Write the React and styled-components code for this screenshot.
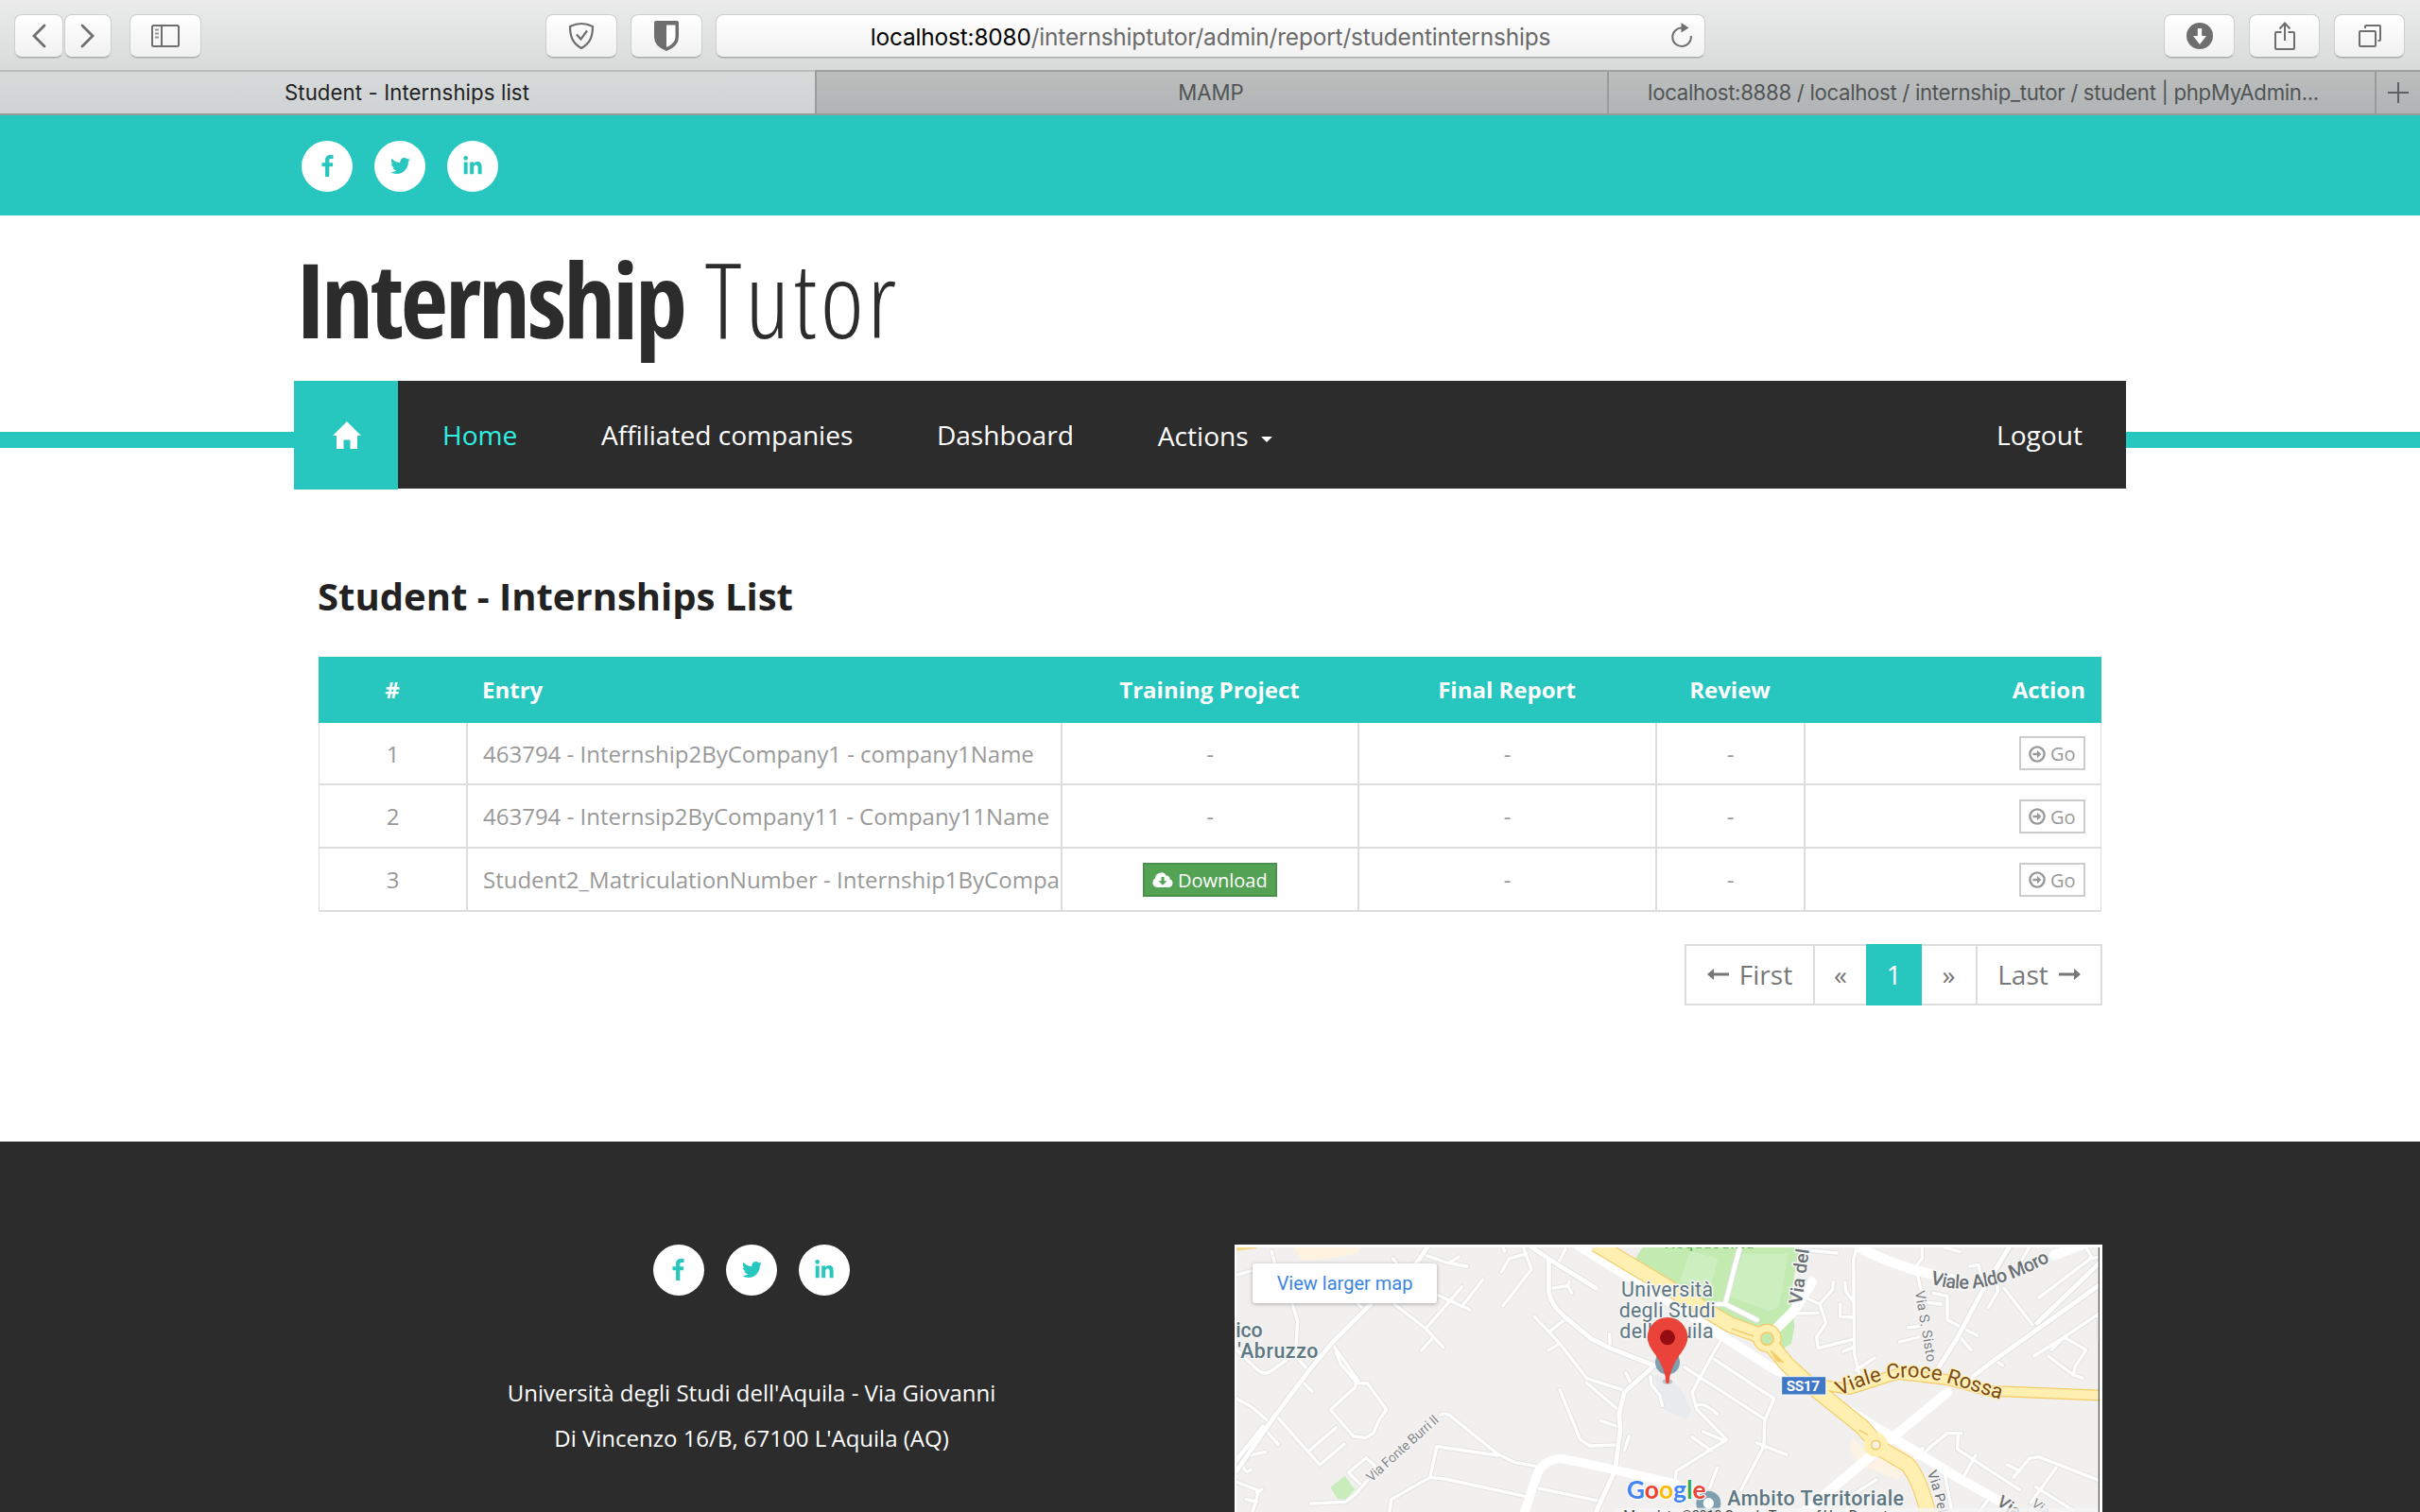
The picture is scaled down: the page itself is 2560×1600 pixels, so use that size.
import React from "react";
import styled, { createGlobalStyle } from "styled-components";
import { FaTwitter, FaLinkedinIn } from "react-icons/fa";

const TEAL = "#27c6bf";
const DARK = "#2c2c2c";
const LINE = "#dddddd";

const Global = createGlobalStyle`
  * { box-sizing: border-box; }
  body { margin: 0; background: #fff; font-family: "Open Sans", sans-serif; overflow: hidden; }
`;

const Page = styled.div`
  width: 2560px;
  height: 1600px;
  display: flex;
  flex-direction: column;
  overflow: hidden;
  background: #fff;
`;

/* ---------- browser chrome ---------- */
const Toolbar = styled.div`
  height: 76px;
  flex: none;
  display: flex;
  align-items: flex-start;
  padding: 15px 16px 0 15px;
  background: linear-gradient(#ebebeb, #e5e7e6 30%, #d9dbda);
  border-bottom: 2px solid #bbbdbc;
`;
const ToolButton = styled.div`
  width: ${(p) => p.$w || 75}px;
  height: 46px;
  margin-right: ${(p) => p.$gap || 0}px;
  display: flex;
  align-items: center;
  justify-content: center;
  border: 1px solid #cdcfce;
  border-bottom-color: #a9abaa;
  border-radius: 8px;
  background: linear-gradient(#fff, #f1f1f1);
  box-shadow: 0 1px 0 rgba(0, 0, 0, 0.12);
`;
const Address = styled.div`
  width: 1047px;
  height: 46px;
  display: flex;
  align-items: center;
  justify-content: center;
  position: relative;
  border: 1px solid #cdcfce;
  border-bottom-color: #a9abaa;
  border-radius: 8px;
  background: linear-gradient(#fff, #f1f1f1);
  box-shadow: 0 1px 0 rgba(0, 0, 0, 0.12);
  font: 24.4px/44px Inter, sans-serif;
  letter-spacing: -0.16px;
  color: #6a6a6a;
  padding-top: 2px;
  white-space: nowrap;
`;
const Host = styled.span`
  color: #000;
`;
const Reload = styled.svg`
  position: absolute;
  right: 11px;
  top: 7px;
`;
const Grow = styled.div`
  flex: 1;
`;
const Tabs = styled.div`
  height: 46px;
  flex: none;
  display: flex;
  border-bottom: 2px solid #979a99;
`;
const Tab = styled.div`
  width: ${(p) => p.$w}px;
  display: flex;
  align-items: center;
  justify-content: center;
  padding-right: ${(p) => p.$pr || 0}px;
  font: 22.2px/44px Inter, sans-serif;
  letter-spacing: ${(p) => p.$ls || 0}px;
  white-space: nowrap;
  color: ${(p) => (p.$active ? "#1f2222" : "#515454")};
  background: ${(p) => (p.$active ? "linear-gradient(#d8dada, #cfd3d4)" : "linear-gradient(#bcbebd, #b0b4b5)")};
  border-left: ${(p) => (p.$active ? "0" : "2px solid #999c9b")};
  box-shadow: ${(p) => (p.$active ? "none" : "0 -2px 0 #a0a2a1")};
`;

/* ---------- site header ---------- */
const TopBar = styled.div`
  height: 106px;
  flex: none;
  display: flex;
  align-items: center;
  padding: 2px 0 0 319px;
  background: ${TEAL};
`;
const Socials = styled.div`
  display: flex;
  gap: 23.2px;
`;
const Circle = styled.a`
  width: 54px;
  height: 54px;
  display: flex;
  align-items: center;
  justify-content: center;
  border-radius: 50%;
  background: #fff;
  color: ${TEAL};
  padding-bottom: 1px;
`;
const Brand = styled.div`
  height: 175px;
  flex: none;
  display: flex;
  padding-left: 314px;
  font-size: 110px;
  line-height: 150px;
  padding-top: 12px;
  color: ${DARK};
  font-stretch: 75%;
  white-space: nowrap;
`;
const BrandBold = styled.span`
  font-weight: 700;
  letter-spacing: -3.1px;
`;
const BrandLight = styled.span`
  font-weight: 300;
  letter-spacing: 3.7px;
  margin-left: 22px;
`;
const NavStrip = styled.div`
  height: 115px;
  flex: none;
  padding: 0 311px;
  background: linear-gradient(${TEAL}, ${TEAL}) 0 54px / 100% 17px no-repeat;
`;
const Nav = styled.nav`
  width: 1938px;
  height: 114px;
  display: flex;
  background: ${DARK};
`;
const HomeTile = styled.div`
  width: 110px;
  height: 115px;
  display: flex;
  align-items: center;
  justify-content: center;
  padding: 0 0 0 2px;
  background: ${TEAL};
`;
const NavLink = styled.a`
  margin-left: ${(p) => p.$ml || 0}px;
  margin-right: ${(p) => p.$mr || 0}px;
  padding-top: ${(p) => p.$pt || 0}px;
  font-size: 28.1px;
  line-height: 115px;
  white-space: nowrap;
  color: ${(p) => (p.$active ? "#2ef0e4" : "#fff")};
`;
const Caret = styled.i`
  display: inline-block;
  margin-left: 13px;
  vertical-align: 4px;
  border: 6px solid transparent;
  border-top-color: #fff;
  border-bottom: 0;
`;

/* ---------- content ---------- */
const Content = styled.main`
  height: 690px;
  flex: none;
  padding: 85px 336px 0 336px;
  display: flex;
  flex-direction: column;
`;
const Title = styled.h1`
  margin: 0 0 37px;
  font-size: 40px;
  line-height: 55px;
  font-weight: 700;
  color: #222;
`;
const Table = styled.div`
  width: 1886px;
  margin-left: 1px;
  border: 1px solid ${LINE};
  border-top: 0;
  border-bottom-width: 2px;
`;
const GRID = "157px 629px 314px 315px 157px 1fr";
const HeadRow = styled.div`
  height: 70px;
  margin: 0 -1px;
  display: grid;
  grid-template-columns: ${GRID};
  background: ${TEAL};
  color: #fff;
  font-weight: 700;
  font-size: 24px;
  line-height: 70px;
`;
const Row = styled.div`
  height: ${(p) => p.$h}px;
  display: grid;
  grid-template-columns: ${GRID};
  border-top: ${(p) => (p.$first ? 0 : 2)}px solid ${LINE};
  color: #999;
  font-size: 24px;
`;
const Cell = styled.div`
  display: flex;
  align-items: center;
  justify-content: ${(p) => p.$align || "center"};
  padding: 0 ${(p) => (p.$head ? 17 : 16)}px 0 16px;
  overflow: hidden;
  white-space: nowrap;
  border-right: ${(p) => (p.$line ? 2 : 0)}px solid ${LINE};
`;
const Entry = styled.span`
  width: 612px;
  flex: none;
  overflow: hidden;
`;
const Button = styled.button`
  height: 36px;
  flex: none;
  display: flex;
  align-items: center;
  gap: 4.5px;
  padding: 1px 8.5px 0;
  font: 20px/31px "Open Sans", sans-serif;
  color: ${(p) => (p.$green ? "#fff" : "#999")};
  background: ${(p) => (p.$green ? "#54a355" : "#fff")};
  border: 2px solid ${(p) => (p.$green ? "#4a914b" : "#ccc")};
`;
const Pager = styled.div`
  align-self: flex-end;
  height: 65px;
  margin-top: 34px;
  display: flex;
  border: 2px solid ${LINE};
  font-size: 28px;
  line-height: 60px;
  color: #777;
`;
const PageLink = styled.a`
  width: ${(p) => p.$w}px;
  display: flex;
  align-items: center;
  justify-content: center;
  gap: 10px;
  padding-bottom: 2px;
  border-left: ${(p) => (p.$line ? 2 : 0)}px solid ${LINE};
  ${(p) => p.$active && `background: ${TEAL}; color: #fff; margin: -2px 0;`}
`;

/* ---------- footer ---------- */
const Footer = styled.footer`
  flex: 1;
  display: flex;
  justify-content: space-between;
  align-items: flex-start;
  padding: 109px 336px 0 337px;
  background: ${DARK};
`;
const Contact = styled.div`
  width: 916px;
  display: flex;
  flex-direction: column;
  align-items: center;
`;
const Addr = styled.p`
  margin: 79px 0 0;
  text-align: center;
  font-size: 24px;
  line-height: 48px;
  color: #fff;
`;
const MapFrame = styled.div`
  width: 918px;
  height: 283px;
  overflow: hidden;
  position: relative;
  background: #fff;
`;
const MapSvg = styled.svg`
  display: block;
`;
const MapButton = styled.a`
  position: absolute;
  left: 19px;
  top: 20px;
  width: 195px;
  height: 42px;
  border-radius: 3px;
  background: #fff;
  box-shadow: 0 1px 4px rgba(0, 0, 0, 0.3);
  text-align: center;
  font: 20px/42px Roboto, sans-serif;
  color: #3a84df;
`;

const G = "#6e6e6e";

const FacebookIcon = () => (
  <svg width="13" height="23" viewBox="0 0 13 23">
    <path d="M12.500 0.200V3.900H10.300C8.600 3.900 8.300 4.700 8.300 5.800V8.300H12.300L11.800 12.300H8.300V23H4.100V12.300H0.500V8.300H4.100V5.300C4.100 1.900 6.200 0 9.400 0 10.900 0 12.100 0.100 12.500 0.200Z" fill={TEAL} />
  </svg>
);

const SocialLinks = () => (
  <Socials>
    <Circle><FacebookIcon /></Circle>
    <Circle><FaTwitter size={21} /></Circle>
    <Circle><FaLinkedinIn size={22} /></Circle>
  </Socials>
);

const GoIcon = () => (
  <svg width="18" height="18" viewBox="0 0 18 18">
    <circle cx="9" cy="9" r="7.6" fill="none" stroke="#999" strokeWidth="2.4" />
    <path d="M4.5 7.7H9V4.8L13.4 9 9 13.2V10.3H4.5Z" fill="#999" />
  </svg>
);
const CloudIcon = () => (
  <svg width="22" height="16" viewBox="0 0 22 16">
    <path d="M5 16A5 5 0 0 1 3 6.6 6.3 6.3 0 0 1 14.7 3.500 3.500 3.500 0 0 1 18.500 7.300 4.500 4.500 0 0 1 17.500 16Z" fill="#fff" />
    <path d="M9.500 5h3v4.200h3L11 13.800 6.500 9.200h3Z" fill="#54a355" />
  </svg>
);
const Arrow = ({ flip }) => (
  <svg width="24" height="14" viewBox="0 0 24 14">
    <path transform={flip ? "translate(24 0) scale(-1 1)" : undefined} d="M0 7 7 1V5.600H23V8.400H7V13Z" fill="#777" />
  </svg>
);

const ROWS = [
  { n: 1, h: 64, entry: "463794 - Internship2ByCompany1 - company1Name" },
  { n: 2, h: 67, entry: "463794 - Internsip2ByCompany11 - Company11Name" },
  { n: 3, h: 67, entry: "Student2_MatriculationNumber - Internship1ByCompany1 - company1Name", file: true },
];

/* Street geometry; the right half is drawn in a group shifted by 1380 units. */
const WEST_MINOR = [
  "M165 72 178 120M230 235 248 295 243 370 245 410 282 450M54 148 110 132",
  "M54 385 120 448Q145 470 170 448L215 415M262 484 294 518",
  "M436 490 470 492 530 575 508 605 488 650 465 664 425 660 352 575 430 505 436 480",
  "M370 395 385 430 436 490M360 370 440 482",
  "M178 592 318 750 396 685M282 708 370 632M138 630 186 685M54 540 100 565 155 612",
  "M146 710 95 720 72 745Q82 785 100 765M54 805 125 832 105 900M135 828 118 838M84 860 118 868",
  "M290 873 400 868 430 845 470 800M445 810 410 775 465 728 500 760",
  "M555 240 655 318 710 377M640 388 675 350M655 318 770 185M690 210 795 258M775 240 836 162",
  "M550 95 570 120M640 80 720 108 785 120M735 105 760 90M440 240 455 255",
  "M965 60 990 130 900 245M968 82 920 95 895 138M900 60 905 72M1098 65 1075 110",
  "M1050 190 1105 182 1118 205M1105 182 1110 168M1095 290 1050 325M1000 280 1080 365 1045 386M1080 365 1165 475 1240 500 1290 515M1165 490 1265 575",
  "M1240 380 1238 335M1308 495 1290 458M1368 470 1370 495 1398 530 1405 562",
  "M1080 512 1145 670 1175 690 1265 687M1210 610 1268 630M1300 660 1285 705",
  "M700 592Q720 580 745 605L882 715 935 742 1020 757M882 720 690 692 668 790 545 860 540 900M668 790 715 795 970 850M1015 825 1205 865",
];
const WEST_MAJOR = [
  "M54 770 178 592 285 450 360 360 480 240M54 735 138 630M625 110 660 60",
  "M985 55 1050 100 1195 190M1045 100 1045 200Q1050 240 1095 280L1180 350 1240 380 1380 435M1380 435 1285 520 1268 590 1272 640 1258 750M1250 780 1195 900",
];
const EAST_MINOR = [
  "M220 340 185 400 120 520 135 575 230 670 70 770 65 810M95 440 350 605M190 415 380 540 350 610 348 690 275 830M348 690 325 680M348 690 420 718M155 645 225 675M120 662 180 705M140 560Q165 555 200 590M200 760 175 825",
  "M640 70 632 100 635 400 655 480M640 450 700 410M655 480 695 470M568 170 565 195 525 240 545 300 515 345 520 380 630 352M605 170 608 200 635 235M590 240 590 280 635 282M480 220 525 240M440 270 520 268M600 390 635 375M500 70 580 78",
  "M850 60 850 95 830 120 838 160 860 250M885 205 930 215 930 290 1025 340M970 345 1005 385M778 360 840 345M805 315 840 310M870 235 910 240M1130 60 1085 135 1090 200 1060 250",
  "M1000 120 1030 115 1035 150M1190 60 1160 110M1370 60 1390 95 1412 90M1385 95 1220 220M1110 190 1200 305M1412 270 1300 345 1205 405M1250 405 1330 465 1360 475M1412 270 1412 360M1370 385 1300 345 1260 385M1370 385 1335 440 1330 465M1085 420 1105 435M920 60 970 74",
  "M820 750 880 690 930 650 975 650M965 650 962 700 1045 755 1160 830M1020 720 980 790M1140 790 1190 730 1220 725 1412 800M1120 750 1160 770M1275 760 1195 870M1210 820 1330 895M920 770 945 900M705 798 620 850 610 900M1030 900 1060 860",
];
const EAST_MAJOR = [
  "M1125 60 1040 200 960 350 890 460M1412 180 1090 410 1010 470 1010 500M1412 110 1215 300M270 65 225 240 325 290M200 240 225 240M820 740 850 700",
];

function MapView() {
  const minor = { fill: "none", strokeLinecap: "round", strokeLinejoin: "round" };
  const halo = { stroke: "#f5f5f4", strokeWidth: 9, paintOrder: "stroke", strokeLinejoin: "round" };
  const roads = (list, w) => (
    <>
      <path {...minor} d={list.join("")} stroke="#e3e3e2" strokeWidth={w + 6} />
      <path {...minor} d={list.join("")} stroke="#fff" strokeWidth={w} />
    </>
  );
  return (
    <MapFrame>
      <MapSvg width="918" height="283" viewBox="48 51 2754 849" fontFamily="Roboto, sans-serif">
        <defs>
          <clipPath id="mapArea"><rect x="54" y="60" width="2736" height="840" /></clipPath>
          <path id="croce" d="M1968 532Q2150 440 2310 490T2490 545" />
          <path id="aldo" d="M2255 174Q2350 205 2450 180T2660 90" />
          <path id="sisto" d="M2207 200Q2230 330 2248 440" />
          <path id="peli" d="M2245 775Q2275 850 2285 930" />
        </defs>
        <g clipPath="url(#mapArea)">
          <rect x="54" y="60" width="2736" height="840" fill="#f1f0ef" />
          <path d="M235 60H445L440 78 345 95 262 102Z" fill="#fdf3de" />
          <path d="M352 822 398 785 430 828 400 860 375 858Z" fill="#c9ecbc" />
          <path d="M1342 60H1840L1815 205 1825 310 1815 365 1790 380 1740 310 1640 305 1440 200 1315 105Z" fill="#c3ebb1" />
          <path d="M1495 70 1582 97 1560 180 1460 170Z M1660 80H1805L1775 250 1740 262 1620 215Z" fill="#cdefc0" />
          <path d="M1380 465 1430 480 1465 510 1498 575 1484 605 1410 575Z" fill="#e8ebee" />
          <path d="M2010 660 2000 700 2020 740 2060 720ZM2045 755 2100 725 2175 755 2155 798ZM2155 695 2205 715 2195 745 2160 735Z" fill="#fcf3e4" />

          {roads(WEST_MINOR, 10)}
          <g transform="translate(1380 0)">{roads(EAST_MINOR, 10)}</g>
          {roads(WEST_MAJOR, 14)}
          <g transform="translate(1380 0)">{roads(EAST_MAJOR, 14)}</g>
          <path {...minor} d="M965 910 1005 790Q1020 735 1085 730L1250 765 1450 812" stroke="#fff" strokeWidth="28" />
          <path {...minor} d="M1140 55 1430 235 1750 440 2000 580 2350 795 2520 890" stroke="#fff" strokeWidth="30" />
          <path {...minor} d="M1850 905 2040 745 2140 660 2310 520" stroke="#fff" strokeWidth="30" />
          <path {...minor} d="M1755 330 1820 265 1880 170M2030 60Q2080 90 2200 130L2320 160M2650 85 2790 30" stroke="#fff" strokeWidth="32" />

          <path {...minor} strokeLinecap="butt" d="M1195 50 1420 185 1620 305 1730 345 1800 430 1860 485 2040 630 2100 700 2185 750Q2225 800 2250 910" stroke="#f5cc69" strokeWidth="52" />
          <path {...minor} strokeLinecap="butt" d="M1900 495 2000 510 2150 462 2310 480 2440 515 2800 530" stroke="#f5cc69" strokeWidth="36" />
          <circle cx="1738" cy="348" r="46" fill="#f5cc69" />
          <path {...minor} strokeLinecap="butt" d="M1195 50 1420 185 1620 305 1730 345 1800 430 1860 485 2040 630 2100 700 2185 750Q2225 800 2250 910" stroke="#ffefb0" strokeWidth="45" />
          <path {...minor} strokeLinecap="butt" d="M1900 495 2000 510 2150 462 2310 480 2440 515 2800 530" stroke="#ffefb0" strokeWidth="28" />
          <circle cx="1738" cy="348" r="42" fill="#ffefb0" />
          <circle cx="1738" cy="350" r="20" fill="#c3ebb1" stroke="#f5cc69" strokeWidth="5" />
          <circle cx="2083" cy="687" r="38" fill="#ffefb0" />
          <circle cx="2083" cy="687" r="14" fill="#f7f1e6" stroke="#f5cc69" strokeWidth="5" />
          <path d="M1625 318 1695 342M1750 388 1770 420 1790 425ZM2030 640 2058 655" fill="#f5cc69" stroke="#f5cc69" strokeWidth="4" />
          <path d="M54 66 118 58" stroke="#f7d98c" strokeWidth="10" />

          <g {...halo} fill="#5d7783" fontWeight="500" fontSize="64">
            <text x="52" y="344" textLength="85">ico</text>
            <text x="58" y="410" textLength="255">'Abruzzo</text>
            <text x="1612" y="879" textLength="560">Ambito Territoriale</text>
          </g>
          <g {...halo} fill="#5d7783" fontSize="64">
            <text x="1275" y="215" textLength="291">Università</text>
            <text x="1268" y="282" textLength="306">degli Studi</text>
            <text x="1270" y="349" textLength="298">dell'Aquila</text>
          </g>
          <text {...halo} fill="#86898b" fontSize="43" transform="translate(482 806) rotate(-42)" textLength="292">Via Fonte Burri II</text>
          <text {...halo} fill="#6b7174" fontSize="58" fontWeight="500" transform="translate(1847 242) rotate(-82)">Via del Crocifisso</text>
          <text {...halo} fill="#6b7174" fontSize="60" fontWeight="500"><textPath href="#aldo" textLength="400">Viale Aldo Moro</textPath></text>
          <text {...halo} fill="#7b8083" fontSize="44"><textPath href="#sisto" textLength="228">Via S. Sisto</textPath></text>
          <text {...halo} fill="#6b7174" fontSize="44"><textPath href="#peli">Via Pelino</textPath></text>
          <text {...halo} fill="#6b7174" fontSize="54" fontWeight="500" transform="translate(2464 876) rotate(34)">Via XX</text>
          <text {...halo} fill="#86898b" fontSize="42" transform="translate(2575 878) rotate(38)">Via P</text>
          <text {...halo} stroke="#fff1bd" fill="#7d4a12" fontSize="66"><textPath href="#croce" textLength="530">Viale Croce Rossa</textPath></text>
          <text x="1415" y="64" fill="#5fae57" fontSize="44" fontWeight="500" textLength="280">Acquasanta</text>

          <rect x="1784" y="470" width="141" height="58" fill="#3f78c4" stroke="#f5f5f5" strokeWidth="3" />
          <text x="1799" y="515" fill="#fff" fontWeight="700" fontSize="46" textLength="106">SS17</text>

          <circle cx="1422" cy="425" r="39" fill="#7f9eae" />
          <ellipse cx="1422" cy="486" rx="16" ry="9" fill="#000" opacity=".18" />
          <path d="M1417 488Q1416 450 1385 403 1358 370 1358 346A64 64 0 0 1 1486 346Q1486 370 1459 403 1428 450 1427 488Q1422 496 1417 488Z" fill="#ea4339" />
          <circle cx="1422" cy="346" r="24" fill="#940d12" />

          <circle cx="1552" cy="872" r="28" fill="#fff" stroke="#7f9eae" strokeWidth="22" />
          <rect x="1254" y="887" width="1536" height="14" fill="#f5f5f5" opacity=".8" />
          <text x="1292" y="857" fontFamily="Lato, sans-serif" fontWeight="700" fontSize="80" stroke="#fff" strokeWidth="7" paintOrder="stroke" textLength="252" lengthAdjust="spacingAndGlyphs">
            <tspan fill="#4285f4">G</tspan><tspan fill="#ea4335">o</tspan><tspan fill="#fbbc05">o</tspan><tspan fill="#4285f4">g</tspan><tspan fill="#34a853">l</tspan><tspan fill="#ea4335">e</tspan>
          </text>
          <text x="1282" y="928" fill="#444" fontSize="44" textLength="1060">Map data ©2018 Google   Terms of Use   Report a map error</text>
        </g>
        <path d="M2791 60V900" stroke="#333" strokeWidth="3" />
      </MapSvg>
      <MapButton>View larger map</MapButton>
    </MapFrame>
  );
}

export default function App() {
  return (
    <Page>
      <Global />
      <Toolbar>
        <ToolButton $w={52} $gap={1}>
          <svg width="16" height="26" viewBox="0 0 16 26"><path d="M14 2 3 13l11 11" fill="none" stroke={G} strokeWidth="2.800" strokeLinecap="round" /></svg>
        </ToolButton>
        <ToolButton $w={50} $gap={19}>
          <svg width="16" height="26" viewBox="0 0 16 26"><path d="M2 2l11 11L2 24" fill="none" stroke={G} strokeWidth="2.800" strokeLinecap="round" /></svg>
        </ToolButton>
        <ToolButton $w={76} $gap={364}>
          <svg width="30" height="24" viewBox="0 0 30 24" fill="none" stroke={G} strokeWidth="2">
            <rect x="1" y="1" width="28" height="22" rx="1.500" />
            <path d="M11 1v22" />
            <path d="M4 5.500h4M4 9.500h4M4 13.500h4" opacity=".7" />
          </svg>
        </ToolButton>
        <ToolButton $w={76} $gap={14}>
          <svg width="28" height="30" viewBox="0 0 28 30" fill="none" stroke={G} strokeWidth="2.200">
            <path d="M14 2C10 2 6 3 2 5 2 16 5 23 14 28 23 23 26 16 26 5 22 3 18 2 14 2Z" strokeLinejoin="round" />
            <path d="M9 13.500l4.500 5L20 9.500" />
          </svg>
        </ToolButton>
        <ToolButton $w={76} $gap={14}>
          <svg width="26" height="32" viewBox="0 0 26 32">
            <path d="M0 2Q0 0 2 0H24Q26 0 26 2V17Q26 27 13 32 0 27 0 17Z" fill={G} />
            <path d="M13 4.500H22.500V17Q22.500 24 13 28Z" fill="#fff" />
          </svg>
        </ToolButton>
        <Address>
          <span><Host>localhost:8080</Host>/internshiptutor/admin/report/studentinternships</span>
          <Reload width="26" height="28" viewBox="0 0 26 28">
            <path d="M13.500 6.500A9.800 9.800 0 1 0 22.800 15" fill="none" stroke={G} strokeWidth="2" />
            <path d="M12.500 1 20.500 6.500 12.500 11.500Z" fill={G} />
          </Reload>
        </Address>
        <Grow />
        <ToolButton $gap={15}>
          <svg width="28" height="28" viewBox="0 0 28 28"><circle cx="14" cy="14" r="14" fill={G} /><path d="M11.800 6h4.400v8H21L14 23 7 14h4.800Z" fill="#fff" /></svg>
        </ToolButton>
        <ToolButton $gap={15}>
          <svg width="24" height="32" viewBox="0 0 24 32" fill="none" stroke={G} strokeWidth="2">
            <path d="M8.500 12H3Q2 12 2 13V29Q2 30 3 30H21Q22 30 22 29V13Q22 12 21 12H15.500M12 21V3M6.500 8.500 12 2.500 17.500 8.500" />
          </svg>
        </ToolButton>
        <ToolButton>
          <svg width="26" height="26" viewBox="0 0 26 26" fill="none" stroke={G} strokeWidth="2">
            <rect x="2" y="8" width="17" height="16" rx="1" />
            <path d="M8 5V3Q8 2 9 2H23Q24 2 24 3V17Q24 18 23 18H21.500" />
          </svg>
        </ToolButton>
      </Toolbar>
      <Tabs>
        <Tab $w={862} $ls={0.1} $pr={1} $active>Student - Internships list</Tab>
        <Tab $w={838} $pr={2}>MAMP</Tab>
        <Tab $w={812} $ls={-0.31} $pr={18}>localhost:8888 / localhost / internship_tutor / student | phpMyAdmin...</Tab>
        <Tab $w={48}>
          <svg width="22" height="22" viewBox="0 0 22 22"><path d="M11 0v22M0 11h22" stroke="#5d6060" strokeWidth="2" /></svg>
        </Tab>
      </Tabs>

      <TopBar><SocialLinks /></TopBar>
      <Brand>
        <BrandBold>Internship</BrandBold>
        <BrandLight>Tutor</BrandLight>
      </Brand>
      <NavStrip>
        <Nav>
          <HomeTile>
            <svg width="30" height="29" viewBox="0 0 30 29"><path d="M15 0 30 15H26V29H18.500V19.500H11.500V29H4V15H0Z" fill="#fff" /></svg>
          </HomeTile>
          <NavLink $ml={47} $active>Home</NavLink>
          <NavLink $ml={88.5}>Affiliated companies</NavLink>
          <NavLink $ml={88.5}>Dashboard</NavLink>
          <NavLink $ml={89} $pt={1}>Actions<Caret /></NavLink>
          <Grow />
          <NavLink $mr={46}>Logout</NavLink>
        </Nav>
      </NavStrip>

      <Content>
        <Title>Student - Internships List</Title>
        <Table>
          <HeadRow>
            <Cell $head>#</Cell>
            <Cell $head $align="flex-start">Entry</Cell>
            <Cell $head>Training Project</Cell>
            <Cell $head>Final Report</Cell>
            <Cell $head>Review</Cell>
            <Cell $head $align="flex-end">Action</Cell>
          </HeadRow>
          {ROWS.map((r) => (
            <Row key={r.n} $h={r.h} $first={r.n === 1}>
              <Cell $line>{r.n}</Cell>
              <Cell $line $align="flex-start"><Entry>{r.entry}</Entry></Cell>
              <Cell $line>{r.file ? <Button $green><CloudIcon />Download</Button> : "-"}</Cell>
              <Cell $line>-</Cell>
              <Cell $line>-</Cell>
              <Cell $align="flex-end"><Button><GoIcon />Go</Button></Cell>
            </Row>
          ))}
        </Table>
        <Pager>
          <PageLink $w={134}><Arrow />First</PageLink>
          <PageLink $w={56} $line>«</PageLink>
          <PageLink $w={59} $active>1</PageLink>
          <PageLink $w={57}>»</PageLink>
          <PageLink $w={132} $line>Last<Arrow flip /></PageLink>
        </Pager>
      </Content>

      <Footer>
        <Contact>
          <SocialLinks />
          <Addr>Università degli Studi dell'Aquila - Via Giovanni<br />Di Vincenzo 16/B, 67100 L'Aquila (AQ)</Addr>
        </Contact>
        <MapView />
      </Footer>
    </Page>
  );
}
